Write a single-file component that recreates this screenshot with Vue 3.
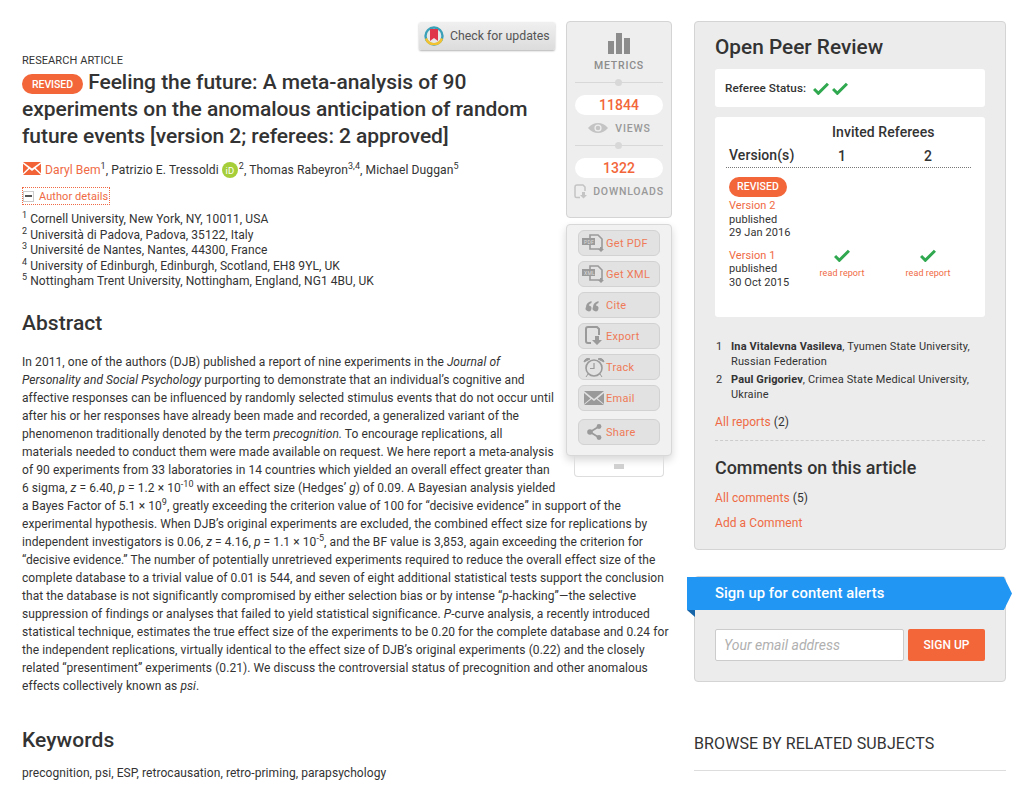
<template>
  <div class="page">
    <main class="article">
      <div class="tools">
        <div class="metrics">
          <svg class="bars" width="26" height="22" viewBox="0 0 26 22"><path d="M2 9h6v13H2zM10 1h6v21h-6zM18 6h6v16h-6z" fill="#8c8c8c" /></svg>
          <div class="metrics-title">METRICS</div>
          <div class="knob-line"><span></span></div>
          <div class="count">11844</div>
          <div class="count-label">
            <svg width="22" height="12" viewBox="0 0 22 12"><path d="M1 6c3-3.500 6-5 10-5s7 1.500 10 5c-3 3.500-6 5-10 5S4 9.500 1 6z" fill="#c4c4c4" /><circle cx="11" cy="6" r="3.600" fill="#eee" /><circle cx="11" cy="6" r="2.300" fill="#c4c4c4" /></svg>
            VIEWS
          </div>
          <div class="knob-line second"><span></span></div>
          <div class="count">1322</div>
          <div class="count-label downloads">
            <svg width="14" height="15" viewBox="0 0 14 15"><path d="M6 13.500H2.500a1.500 1.500 0 0 1-1.500-1.500V3A2 2 0 0 1 3 1h6l2 2v4" fill="none" stroke="#c4c4c4" stroke-width="1.500" /><path d="M8 8h3v3h2l-3.500 3.500L6 11h2z" fill="#c4c4c4" /></svg>
            DOWNLOADS
          </div>
        </div>
        <div class="actions">
          <a v-for="a in actions" :key="a.label" class="action" :class="a.cls">
            <span class="action-icon" v-html="a.icon"></span>{{ a.label }}
          </a>
        </div>
        <div class="tab"><span></span></div>
      </div>

      <a class="updates">
        <svg width="20" height="20" viewBox="0 0 20 20">
          <circle cx="10" cy="10" r="8.500" fill="#e8e8e8" stroke="#3aa0b8" stroke-width="2.400" />
          <path d="M2 12.500A8.500 8.500 0 0 0 18 12.500" fill="none" stroke="#f2c230" stroke-width="2.400" />
          <path d="M6 3h8v12l-4-3-4 3z" fill="#e0344a" />
        </svg>
        Check for updates
      </a>

      <div class="kicker">RESEARCH ARTICLE</div>
      <h1 class="title"><span class="revised">REVISED</span> Feeling the future: A meta-analysis of 90 experiments on the anomalous anticipation of random future events [version 2; referees: 2 approved]</h1>

      <p class="authors">
        <svg class="mail" width="18" height="13" viewBox="0 0 18 13"><path d="M0 0h18L9 6.500zM0 1.800v9.400L5.300 6zM18 1.800v9.400L12.700 6zM0 13h18l-6.400-6L9 9 6.400 7z" fill="#f26438" /></svg>
        <a>Daryl Bem</a><sup>1</sup>, Patrizio E. Tressoldi
        <svg class="orcid" width="16" height="16" viewBox="0 0 16 16"><circle cx="8" cy="8" r="8" fill="#a6ce39" /><text x="3.600" y="11.500" font-size="9.500" font-family="Roboto, sans-serif" fill="#fff">iD</text></svg>
        <sup>2</sup>, Thomas Rabeyron<sup>3,4</sup>, Michael Duggan<sup>5</sup>
      </p>
      <div class="details"><span class="minus"><i></i></span><a>Author details</a></div>
      <ol class="affils">
        <li v-for="(aff, i) in affiliations" :key="i"><sup>{{ i + 1 }}</sup> {{ aff }}</li>
      </ol>

      <h2 class="heading">Abstract</h2>
      <p class="abstract">In 2011, one of the authors (DJB) published a report of nine experiments in the <em>Journal of Personality and Social Psychology</em> purporting to demonstrate that an individual’s cognitive and affective responses can be influenced by randomly selected stimulus events that do not occur until after his or her responses have already been made and recorded, a generalized variant of the phenomenon traditionally denoted by the term <em>precognition.</em> To encourage replications, all<br />materials needed to conduct them were made available on request. We here report a meta-analysis of 90 experiments from 33 laboratories in 14 countries which yielded an overall effect greater than<br />6 sigma, <em>z</em> = 6.40, <em>p</em> = 1.2 × 10<sup>-10</sup> with an effect size (Hedges’ <em>g</em>) of 0.09. A Bayesian analysis yielded a Bayes Factor of 5.1 × 10<sup>9</sup>, greatly exceeding the criterion value of 100 for “decisive evidence” in support of the experimental hypothesis. When DJB’s original experiments are excluded, the combined effect size for replications by independent investigators is 0.06, <em>z</em> = 4.16, <em>p</em> = 1.1 × 10<sup>-5</sup>, and the BF value is 3,853, again exceeding the criterion for “decisive evidence.” The number of potentially unretrieved experiments required to reduce the overall effect size of the complete database to a trivial value of 0.01 is 544, and seven of eight additional statistical tests support the conclusion that the database is not significantly compromised by either selection bias or by intense “<em>p</em>-hacking”—the selective suppression of findings or analyses that failed to yield statistical significance. <em>P</em>-curve analysis, a recently introduced statistical technique, estimates the true effect size of the experiments to be 0.20 for the complete database and 0.24 for the independent replications, virtually identical to the effect size of DJB’s original experiments (0.22) and the closely related “presentiment” experiments (0.21). We discuss the controversial status of precognition and other anomalous effects collectively known as <em>psi</em>.</p>

      <h2 class="heading keywords-heading">Keywords</h2>
      <p class="keywords">precognition, psi, ESP, retrocausation, retro-priming, parapsychology</p>
    </main>

    <aside class="side">
      <section class="panel review">
        <h2 class="panel-title">Open Peer Review</h2>
        <div class="status">
          <b>Referee Status:</b>
          <svg v-for="n in 2" :key="n" class="tick" width="16" height="13" viewBox="0 0 15 12"><path d="M1 6.500l4 4 9-9" fill="none" stroke="#2fa84f" stroke-width="2.800" /></svg>
        </div>
        <div class="versions">
          <div class="invited">Invited Referees</div>
          <div class="v-head"><span class="v-col">Version(s)</span><span class="r-col">1</span><span class="r-col">2</span></div>
          <div class="v-row first">
            <div class="v-col">
              <span class="revised small">REVISED</span>
              <a>Version 2</a><br />published<br />29 Jan 2016
            </div>
          </div>
          <div class="v-row">
            <div class="v-col"><a>Version 1</a><br />published<br />30 Oct 2015</div>
            <div v-for="n in 2" :key="n" class="r-col report">
              <svg class="tick" width="16" height="13" viewBox="0 0 15 12"><path d="M1 6.500l4 4 9-9" fill="none" stroke="#2fa84f" stroke-width="2.800" /></svg>
              <a>read report</a>
            </div>
          </div>
        </div>
        <ol class="referees">
          <li><span>1</span><div><b>Ina Vitalevna Vasileva</b>, Tyumen State University, Russian Federation</div></li>
          <li><span>2</span><div><b>Paul Grigoriev</b>, Crimea State Medical University, Ukraine</div></li>
        </ol>
        <p class="all"><a>All reports</a> (2)</p>
        <h3 class="comments-title">Comments on this article</h3>
        <p class="line"><a>All comments</a> (5)</p>
        <p class="line add"><a>Add a Comment</a></p>
      </section>

      <section class="panel signup">
        <div class="ribbon">Sign up for content alerts</div>
        <form class="signup-form" @submit.prevent>
          <input class="email" placeholder="Your email address" />
          <button class="go">SIGN UP</button>
        </form>
      </section>

      <h3 class="browse">BROWSE BY RELATED SUBJECTS</h3>
    </aside>
  </div>
</template>

<script setup>
const affiliations = [
  'Cornell University, New York, NY, 10011, USA',
  'Università di Padova, Padova, 35122, Italy',
  'Université de Nantes, Nantes, 44300, France',
  'University of Edinburgh, Edinburgh, Scotland, EH8 9YL, UK',
  'Nottingham Trent University, Nottingham, England, NG1 4BU, UK'
]

const docIcon = tag => `<svg width="24" height="20" viewBox="0 0 24 20"><path d="M8 2h8l4 4v10H8z" fill="none" stroke="#9a9a9a" stroke-width="1.600"/><path d="M0 5h13v7H0z" fill="#9a9a9a"/><text x="2" y="10.500" font-size="5" font-family="Roboto, sans-serif" fill="#ddd">${tag}</text><path d="M18 14h2v2h2l-3 3-3-3h2z" fill="#9a9a9a"/></svg>`

const actions = [
  { label: 'Get PDF', icon: docIcon('PDF') },
  { label: 'Get XML', icon: docIcon('XML') },
  { label: 'Cite', icon: '<svg width="24" height="20" viewBox="0 0 24 20"><path d="M4 12c0-3 2-5 5.500-6v2C8 8.500 7 9.500 7 10.500a2.900 2.900 0 1 1-3 1.500zM11 12c0-3 2-5 5.500-6v2c-1.500.5-2.500 1.500-2.500 2.500a2.900 2.900 0 1 1-3 1.500z" fill="#9a9a9a"/></svg>' },
  { label: 'Export', icon: '<svg width="24" height="22" viewBox="0 0 24 22"><path d="M9 18H6a2 2 0 0 1-2-2V4a2 2 0 0 1 2-2h9l2 2v6" fill="none" stroke="#9a9a9a" stroke-width="2"/><path d="M13 11h4v4h3l-5 5-5-5h3z" fill="#9a9a9a"/></svg>' },
  { label: 'Track', icon: '<svg width="24" height="22" viewBox="0 0 24 22"><circle cx="12" cy="12" r="8" fill="none" stroke="#9a9a9a" stroke-width="1.600"/><path d="M12 7v5.500H8" fill="none" stroke="#9a9a9a" stroke-width="1.200"/><path d="M2 6a4 4 0 0 1 6-3zM22 6a4 4 0 0 0-6-3zM6 18l-2 3M18 18l2 3" fill="#9a9a9a" stroke="#9a9a9a"/></svg>' },
  { label: 'Email', icon: '<svg width="24" height="18" viewBox="0 0 24 18"><path d="M2 2h20L12 10zM2 4v11l6.500-5.500zM22 4v11l-6.500-5.500zM2 16h20l-7.500-6-2.500 2-2.500-2z" fill="#9a9a9a"/></svg>' },
  { label: 'Share', cls: 'share', icon: '<svg width="24" height="20" viewBox="0 0 24 20"><path d="M17 4.500L8 10l9 5.500" fill="none" stroke="#9a9a9a" stroke-width="1.800"/><circle cx="17" cy="4.500" r="2.400" fill="#9a9a9a"/><circle cx="8" cy="10" r="2.800" fill="#9a9a9a"/><circle cx="17" cy="15.500" r="2.400" fill="#9a9a9a"/></svg>' }
]
</script>

<style>
html, body { background: #fff; }
</style>

<style scoped>
.page {
  display: flex;
  align-items: flex-start;
  height: 790px;
  overflow: hidden;
  box-sizing: border-box;
  padding: 21px 0 0 22px;
  font-family: Roboto, sans-serif;
  color: #333;
  font-size: 12px;
  letter-spacing: .07px;
}
a { color: #ef6a44; }
sup { font-size: 9px; line-height: 0; }

.article { width: 650px; flex: none; }
.tools { float: right; width: 106px; margin: 0 0 6px 8px; }
.metrics {
  box-sizing: border-box;
  height: 197px;
  background: #eee;
  border: 1px solid #d4d4d4;
  border-radius: 4px;
  padding: 10px 8px 0;
  text-align: center;
}
.bars { display: block; margin: 0 auto; }
.metrics-title { margin-top: 5px; font-size: 10.500px; letter-spacing: .8px; color: #8c8c8c; font-weight: 500; }
.knob-line { height: 1px; background: #d8d8d8; margin: 10px 0 12px; position: relative; }
.knob-line.second { margin-top: 4px; }
.knob-line span { position: absolute; left: 40px; top: -3px; width: 7px; height: 7px; border-radius: 50%; background: #d8d8d8; }
.count { background: #fff; border-radius: 10px; height: 20px; line-height: 20px; color: #f2663a; font-size: 14px; font-weight: 500; }
.count-label { display: flex; align-items: center; justify-content: center; gap: 6px; height: 26px; font-size: 10.500px; letter-spacing: .8px; color: #999; font-weight: 500; }
.count-label.downloads { gap: 5px; margin: 0 -4px; white-space: nowrap; }

.actions {
  position: relative;
  box-sizing: border-box;
  margin-top: 6px;
  height: 232px;
  background: #f1f1f1;
  border: 1px solid #d8d8d8;
  border-radius: 4px;
  padding: 5px 11px 0;
  box-shadow: 0 4px 8px rgba(0, 0, 0, .16);
}
.action {
  display: flex;
  align-items: center;
  box-sizing: border-box;
  height: 26px;
  margin-bottom: 5px;
  background: #e2e2e2;
  border: 1px solid #d2d2d2;
  border-radius: 6px;
  font-size: 11px;
  letter-spacing: .3px;
  color: #ef7a58;
}
.action.share { margin-top: 8px; }
.action-icon { display: flex; width: 24px; margin: 0 0 0 3px; justify-content: center; }
.tab { margin: 0 8px; height: 21px; border: 1px solid #ddd; border-top: 0; border-radius: 0 0 4px 4px; box-sizing: border-box; position: relative; }
.tab span { position: absolute; left: 39px; top: 8px; width: 10px; height: 5px; background: #d0d0d0; }

.updates {
  float: right;
  display: flex;
  align-items: center;
  gap: 6px;
  box-sizing: border-box;
  width: 136px;
  height: 28px;
  margin: 1px 3px 0 0;
  padding-left: 5px;
  background: linear-gradient(#f0f0f0, #dcdcdc);
  border-radius: 2px;
  box-shadow: 0 1px 2px rgba(0, 0, 0, .3);
  font-size: 12.300px;
  letter-spacing: 0;
  color: #555;
  white-space: nowrap;
}
.kicker { clear: left; padding-top: 34px; line-height: 12px; font-size: 11px; color: #333; }
.title { margin: 2px 0 0; font-size: 21px; letter-spacing: -.05px; line-height: 27px; font-weight: 500; color: #333; }
.revised {
  display: inline-block;
  box-sizing: border-box;
  width: 61px;
  text-align: center;
  background: #f2663a;
  color: #fff;
  border-radius: 10px;
  height: 20px;
  line-height: 21px;
  font-size: 10.500px;
  font-weight: 500;
  vertical-align: 1px;
}
.authors { margin: 12px 0 0; line-height: 16px; font-size: 12.100px; }
.mail { vertical-align: -1px; margin: 0 4px 0 1px; }
.orcid { vertical-align: -4px; margin: 0 1px 0 0; }
.details {
  display: inline-flex;
  align-items: center;
  gap: 5px;
  margin-top: 9px;
  height: 16px;
  border: 1px dotted #ef6a44;
  font-size: 11px;
  padding-right: 1px;
}
.minus { position: relative; width: 11px; height: 11px; border: 1px solid #ccc; box-sizing: border-box; }
.minus i { position: absolute; left: 1px; right: 1px; top: 3px; height: 2px; background: #555; }
.affils { list-style: none; margin: 7px 0 0; padding: 0; line-height: 15.500px; }

.heading { margin: 21px 0 0; font-size: 21px; line-height: 24px; font-weight: 500; color: #333; }
.abstract { margin: 18px 0 0; line-height: 18px; }
.keywords-heading { margin-top: 33px; }
.keywords { margin: 13px 0 0; line-height: 16px; }

.side { width: 312px; margin-left: 22px; flex: none; }
.panel {
  box-sizing: border-box;
  background: #ececec;
  border: 1px solid #d4d4d4;
  border-radius: 4px;
}
.review { height: 529px; padding: 11px 20px 0; }
.panel-title { margin: 0; font-size: 20.800px; letter-spacing: 0; line-height: 28px; font-weight: 500; color: #333; }
.status { display: flex; align-items: center; gap: 3px; margin-top: 8px; height: 38px; padding-left: 10px; background: #fff; border-radius: 3px; font-size: 11.700px; }
.status b { margin-right: 4px; font-weight: 500; }
.tick { display: block; }
.versions { box-sizing: border-box; height: 200px; margin-top: 10px; padding: 7px 14px 0 11px; background: #fff; border-radius: 3px; }
.invited { font-size: 14px; line-height: 16px; font-weight: 500; padding-left: 106px; }
.v-head { display: flex; align-items: center; height: 23px; margin-top: 4px; border-bottom: 1px dotted #777; font-size: 14px; font-weight: 500; }
.v-col { width: 73px; flex: none; padding-left: 3px; box-sizing: border-box; font-size: 11px; line-height: 13.500px; }
.v-head .v-col { font-size: 14px; white-space: nowrap; }
.r-col { width: 86px; flex: none; text-align: center; }
.v-row { display: flex; margin-top: 9px; }
.v-row + .v-row { margin-top: 9px; }
.revised.small { display: block; width: 58px; margin-bottom: 2px; height: 20px; line-height: 19px; }
.report { font-size: 9px; display: flex; flex-direction: column; align-items: center; gap: 6px; padding-top: 0; }
.referees { list-style: none; margin: 22px 0 0; padding: 0; font-size: 11px; line-height: 15px; letter-spacing: .13px; }
.referees li { display: flex; margin-bottom: 3px; padding-left: 1px; }
.referees li span { width: 15px; flex: none; }
.referees b { font-weight: 700; }
.all { margin: 12px 0 0; padding-bottom: 10px; font-size: 12px; line-height: 16px; border-bottom: 1px dashed #ccc; }
.comments-title { margin: 15px 0 0; font-size: 17.900px; letter-spacing: 0; line-height: 24px; font-weight: 500; color: #333; }
.line { margin: 10px 0 0; font-size: 12px; line-height: 16px; }
.line.add { margin-top: 9px; }

.signup { position: relative; margin-top: 26px; height: 106px; }
.ribbon {
  position: absolute;
  left: -8px;
  top: 0;
  width: 325px;
  height: 33px;
  box-sizing: border-box;
  padding-left: 28px;
  line-height: 32px;
  background: #2196f3;
  color: #fff;
  font-size: 14.800px;
  font-weight: 500;
  clip-path: polygon(0 0, 97.500% 0, 100% 50%, 97.500% 100%, 0 100%);
}
.signup::before {
  content: '';
  position: absolute;
  left: -8px;
  top: 33px;
  border-top: 7px solid #1565a8;
  border-left: 8px solid transparent;
}
.signup-form { display: flex; gap: 4px; padding: 52px 20px 0; }
.email {
  box-sizing: border-box;
  width: 189px;
  height: 32px;
  padding: 0 8px;
  border: 1px solid #ccc;
  border-radius: 2px;
  background: #fff;
  font: italic 14px Roboto, sans-serif;
  outline: none;
}
.email::placeholder { color: #b0b0b0; }
.go {
  width: 77px;
  height: 32px;
  border: 0;
  border-radius: 2px;
  background: #f2663a;
  color: #fff;
  font: 500 12px Roboto, sans-serif;
}
.browse { margin: 51px 0 0; padding-bottom: 15px; border-bottom: 1px solid #ddd; font-size: 16px; letter-spacing: .1px; line-height: 22px; font-weight: 400; color: #333; }
</style>
